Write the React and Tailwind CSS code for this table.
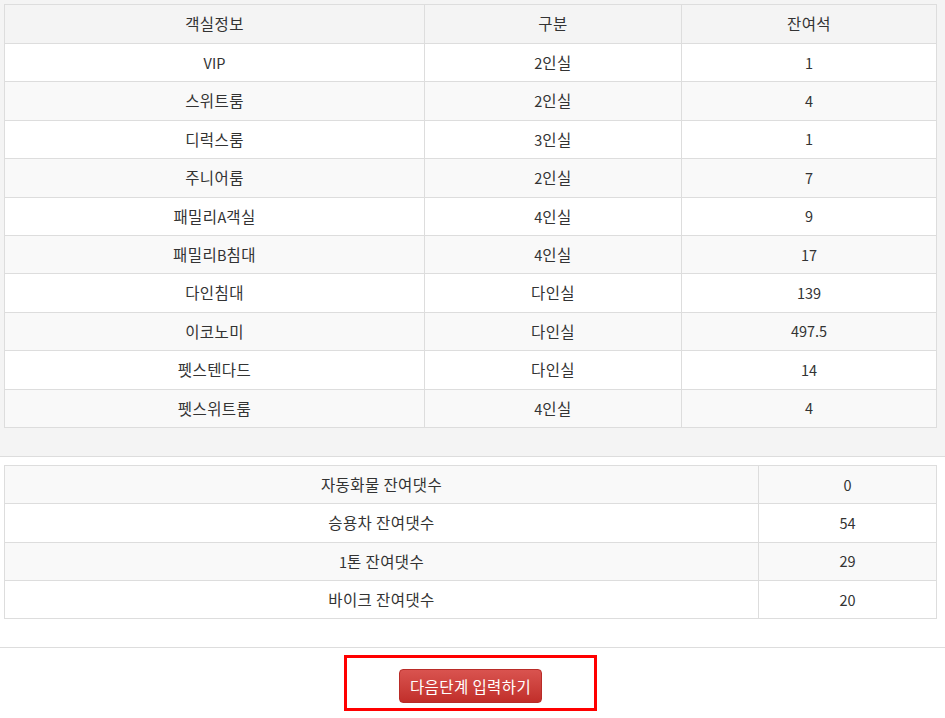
import React from 'react'

const rooms = [
  ['VIP', '2인실', '1'],
  ['스위트룸', '2인실', '4'],
  ['디럭스룸', '3인실', '1'],
  ['주니어룸', '2인실', '7'],
  ['패밀리A객실', '4인실', '9'],
  ['패밀리B침대', '4인실', '17'],
  ['다인침대', '다인실', '139'],
  ['이코노미', '다인실', '497.5'],
  ['펫스텐다드', '다인실', '14'],
  ['펫스위트룸', '4인실', '4'],
]

const vehicles = [
  ['자동화물 잔여댓수', '0'],
  ['승용차 잔여댓수', '54'],
  ['1톤 잔여댓수', '29'],
  ['바이크 잔여댓수', '20'],
]

const font = { fontFamily: '"Noto Sans CJK KR", "Noto Sans", sans-serif' }

// Hangul in the original renders wider than the digits, so give those runs a bit more size
const Txt = ({ t }) =>
  t.split(/([가-힣][가-힣 ]*)/).filter(Boolean).map((part, i) =>
    /[가-힣]/.test(part)
      ? <span key={i} className="text-[15.5px] tracking-[0.4px]">{part}</span>
      : <span key={i} className="text-[14.5px]">{part}</span>
  )

const App = () => {
  return (
    <div className="w-[945px] min-h-[718px] bg-white text-[14px] text-[#333]" style={font}>

      {/* Room table */}
      <div className="bg-[#f4f4f4] pt-1 pl-1 pr-[9px] pb-7 border-b border-[#ddd]">
        <table className="w-[932px] border-collapse border border-[#ddd] table-fixed">
          <colgroup>
            <col className="w-[420px]" />
            <col className="w-[257px]" />
            <col className="w-[255px]" />
          </colgroup>
          <thead>
            <tr className="bg-[#f4f4f4]">
              {['객실정보', '구분', '잔여석'].map((h) => (
                <th key={h} className="h-[39px] border border-[#ddd] font-normal text-center p-0"><Txt t={h} /></th>
              ))}
            </tr>
          </thead>
          <tbody>
            {rooms.map((r, i) => (
              <tr key={r[0]} className={i % 2 === 0 ? 'bg-white' : 'bg-[#f9f9f9]'}>
                {r.map((c, j) => (
                  <td key={j} className="h-[38.4px] border border-[#ddd] text-center p-0"><Txt t={c} /></td>
                ))}
              </tr>
            ))}
          </tbody>
        </table>
      </div>

      {/* Vehicle table */}
      <div className="pt-2 pl-1 pr-[9px] pb-7 border-b border-[#ddd]">
        <table className="w-[932px] border-collapse border border-[#ddd] table-fixed">
          <colgroup>
            <col className="w-[754px]" />
            <col className="w-[178px]" />
          </colgroup>
          <tbody>
            {vehicles.map((r, i) => (
              <tr key={r[0]} className={i % 2 === 0 ? 'bg-[#f9f9f9]' : 'bg-white'}>
                <td className="h-[38.4px] border border-[#ddd] text-center p-0"><Txt t={r[0]} /></td>
                <td className="h-[38.4px] border border-[#ddd] text-center p-0"><Txt t={r[1]} /></td>
              </tr>
            ))}
          </tbody>
        </table>
      </div>

      {/* Next step */}
      <div className="flex justify-center pt-[7px] pr-[4px]">
        <div className="w-[253px] h-[56px] border-[3px] border-[#f00] flex justify-center pt-[11px]">
          <button className="h-[34px] w-[143px] rounded-[4px] border border-[#b92c28] bg-gradient-to-b from-[#d9534f] to-[#c12e2a] text-white text-[14px] leading-none" style={font}>
            <Txt t="다음단계 입력하기" />
          </button>
        </div>
      </div>
    </div>
  )
}

export default App
